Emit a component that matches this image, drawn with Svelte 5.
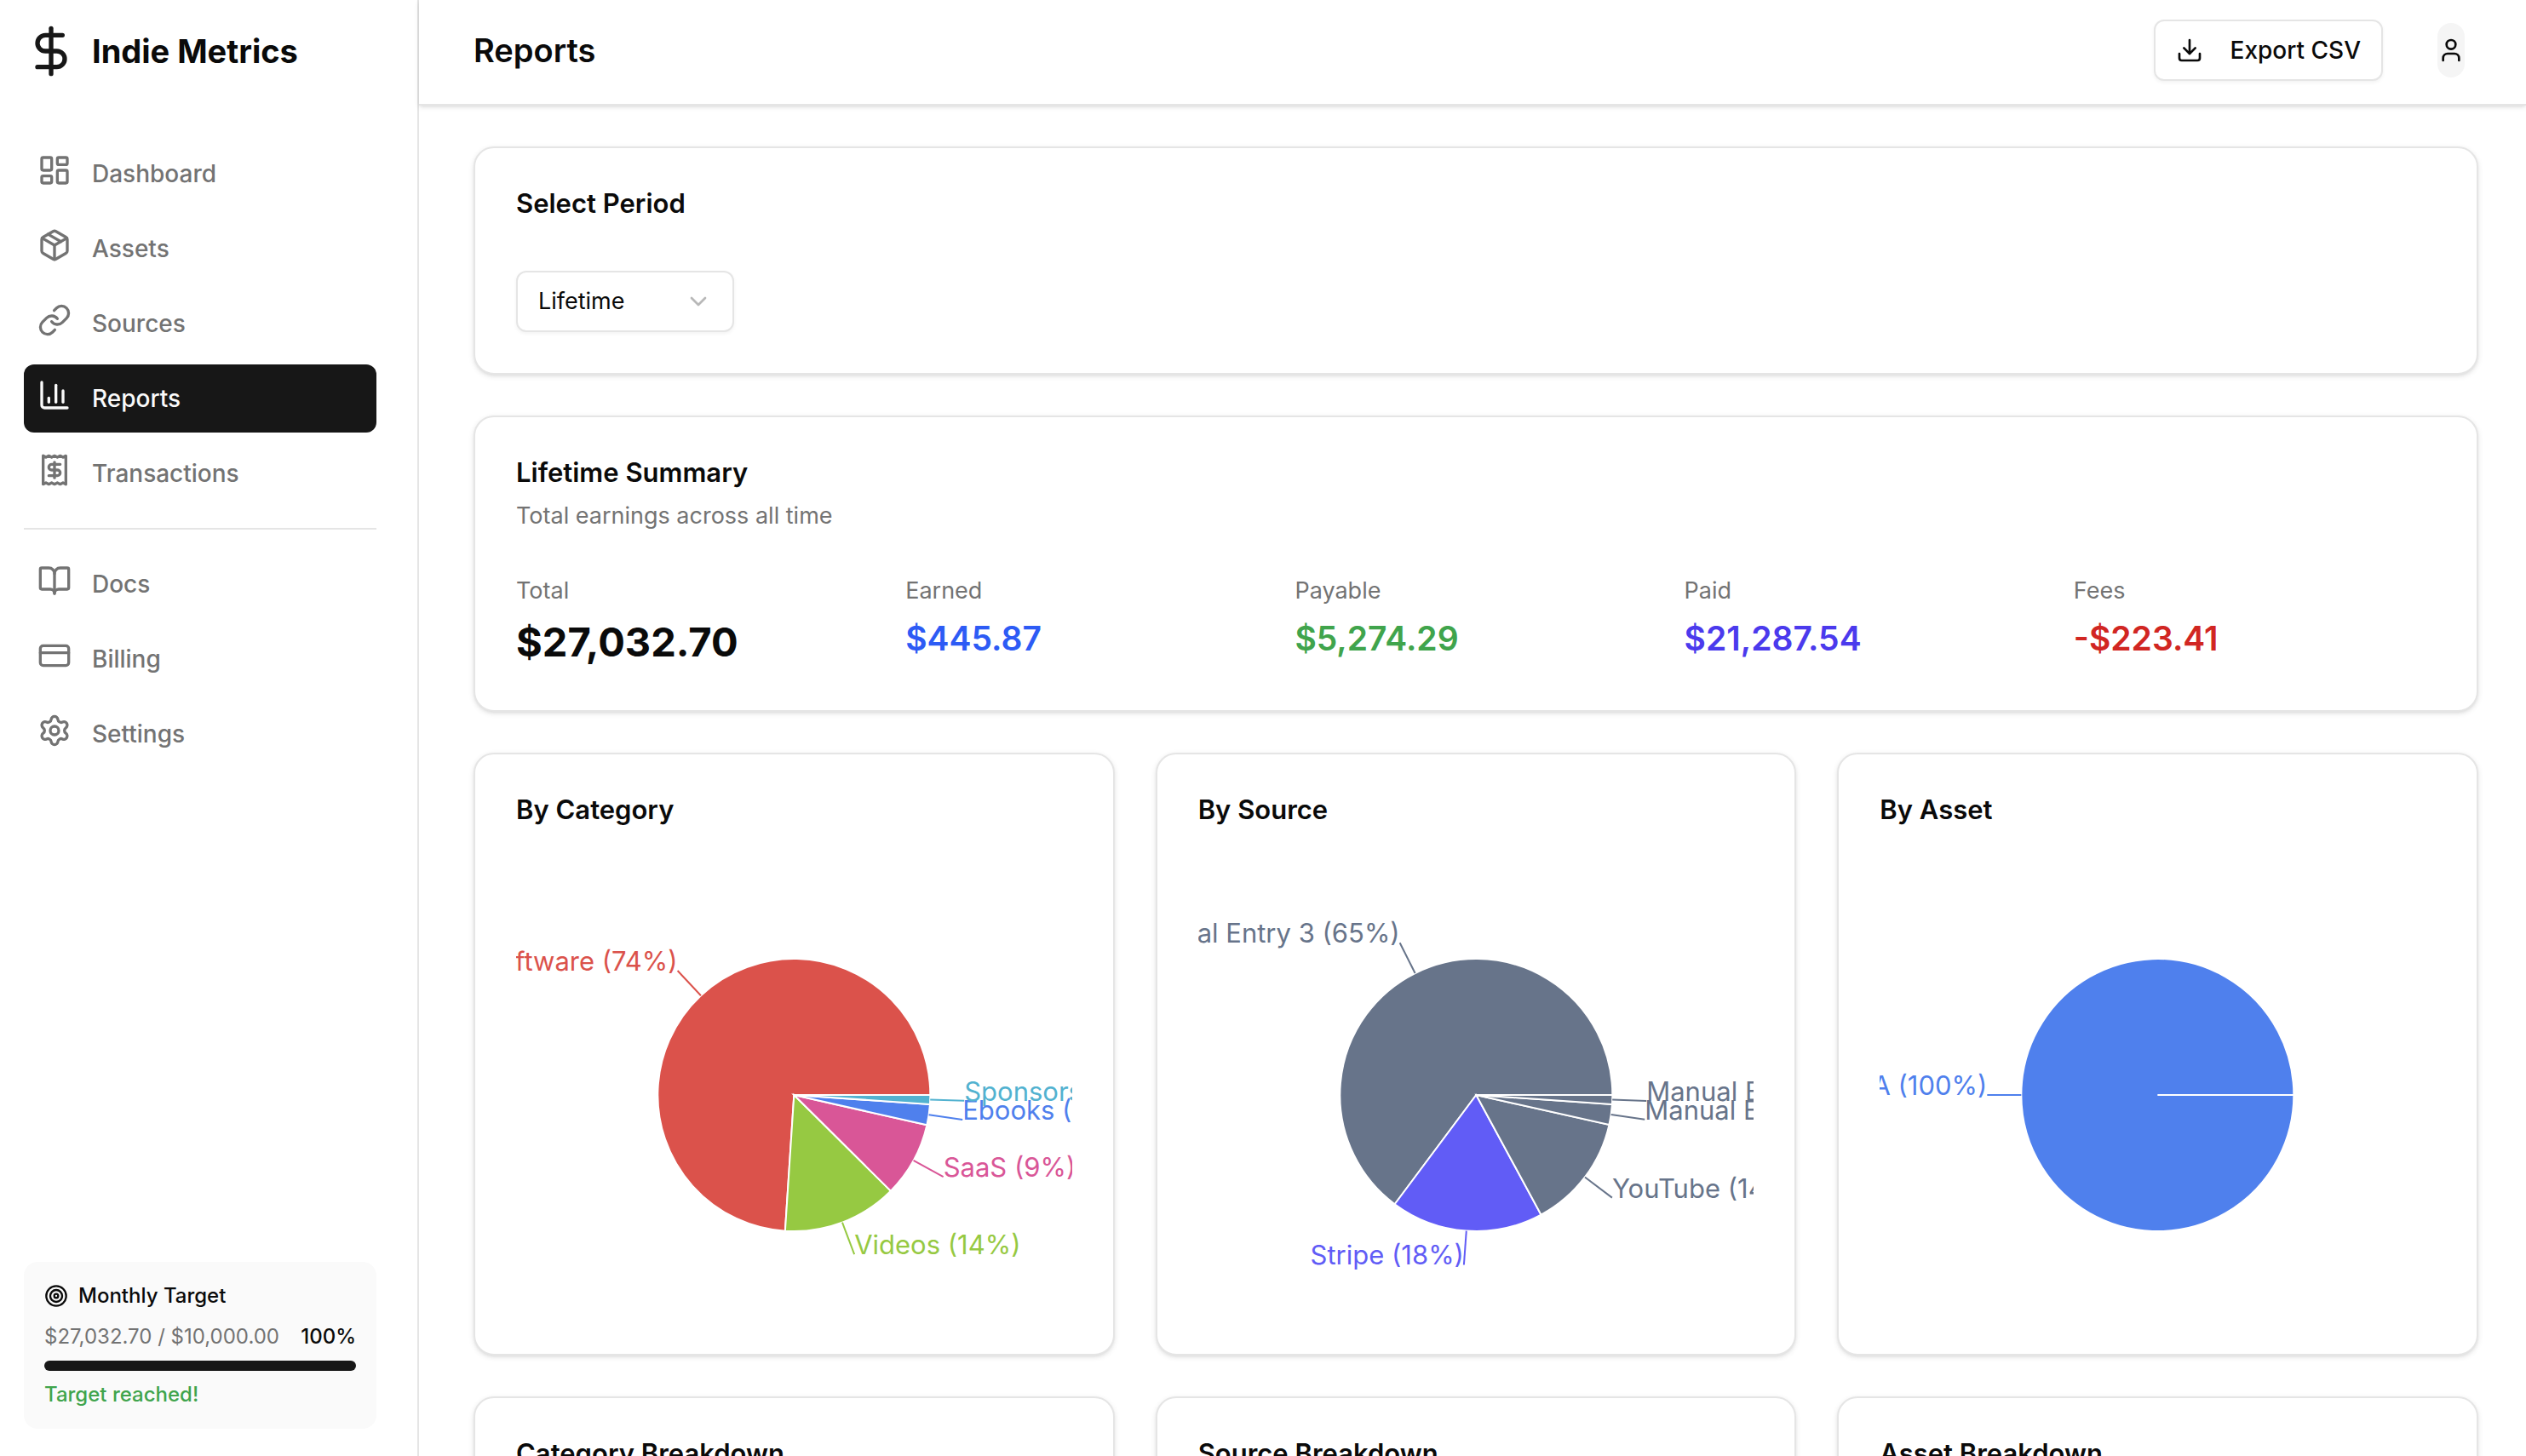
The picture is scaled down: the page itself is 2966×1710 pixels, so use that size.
<script>
  const mainLinks = [
    { label: 'Dashboard', icon: 'dashboard' },
    { label: 'Assets', icon: 'package' },
    { label: 'Sources', icon: 'link' },
    { label: 'Reports', icon: 'chart' },
    { label: 'Transactions', icon: 'receipt' }
  ];

  const secondaryLinks = [
    { label: 'Docs', icon: 'book' },
    { label: 'Billing', icon: 'card' },
    { label: 'Settings', icon: 'settings' }
  ];

  const icons = {
    dollar: ['M12 2v20', 'M17 5H9.5a3.5 3.5 0 0 0 0 7h5a3.5 3.5 0 0 1 0 7H6'],
    dashboard: [
      'M4 3h5a1 1 0 0 1 1 1v7a1 1 0 0 1-1 1H4a1 1 0 0 1-1-1V4a1 1 0 0 1 1-1z',
      'M15 3h5a1 1 0 0 1 1 1v3a1 1 0 0 1-1 1h-5a1 1 0 0 1-1-1V4a1 1 0 0 1 1-1z',
      'M15 12h5a1 1 0 0 1 1 1v7a1 1 0 0 1-1 1h-5a1 1 0 0 1-1-1v-7a1 1 0 0 1 1-1z',
      'M4 16h5a1 1 0 0 1 1 1v3a1 1 0 0 1-1 1H4a1 1 0 0 1-1-1v-3a1 1 0 0 1 1-1z'
    ],
    package: [
      'M11 21.73a2 2 0 0 0 2 0l7-4A2 2 0 0 0 21 16V8a2 2 0 0 0-1-1.73l-7-4a2 2 0 0 0-2 0l-7 4A2 2 0 0 0 3 8v8a2 2 0 0 0 1 1.73z',
      'M12 22V12',
      'M3.29 7 12 12l8.71-5',
      'm7.5 4.27 9 5.15'
    ],
    link: [
      'M10 13a5 5 0 0 0 7.54.54l3-3a5 5 0 0 0-7.07-7.07l-1.72 1.71',
      'M14 11a5 5 0 0 0-7.54-.54l-3 3a5 5 0 0 0 7.07 7.07l1.71-1.71'
    ],
    chart: ['M3 3v16a2 2 0 0 0 2 2h16', 'M18 17V9', 'M13 17V5', 'M8 17v-3'],
    receipt: [
      'M4 2v20l2-1 2 1 2-1 2 1 2-1 2 1 2-1 2 1V2l-2 1-2-1-2 1-2-1-2 1-2-1-2 1Z',
      'M16 8h-6a2 2 0 1 0 0 4h4a2 2 0 1 1 0 4H8',
      'M12 17.5v-11'
    ],
    book: [
      'M12 7v14',
      'M3 18a1 1 0 0 1-1-1V4a1 1 0 0 1 1-1h5a4 4 0 0 1 4 4 4 4 0 0 1 4-4h5a1 1 0 0 1 1 1v13a1 1 0 0 1-1 1h-6a3 3 0 0 0-3 3 3 3 0 0 0-3-3z'
    ],
    card: ['M4 5h16a2 2 0 0 1 2 2v10a2 2 0 0 1-2 2H4a2 2 0 0 1-2-2V7a2 2 0 0 1 2-2z', 'M2 10h20'],
    settings: [
      'M9.671 4.136a2.34 2.34 0 0 1 4.659 0 2.34 2.34 0 0 0 3.319 1.915 2.34 2.34 0 0 1 2.33 4.033 2.34 2.34 0 0 0 0 3.831 2.34 2.34 0 0 1-2.33 4.033 2.34 2.34 0 0 0-3.319 1.915 2.34 2.34 0 0 1-4.659 0 2.34 2.34 0 0 0-3.32-1.915 2.34 2.34 0 0 1-2.33-4.033 2.34 2.34 0 0 0 0-3.831A2.34 2.34 0 0 1 6.35 6.051a2.34 2.34 0 0 0 3.319-1.915',
      'M9 12a3 3 0 1 0 6 0a3 3 0 1 0-6 0'
    ],
    target: [
      'M2 12a10 10 0 1 0 20 0a10 10 0 1 0-20 0',
      'M6 12a6 6 0 1 0 12 0a6 6 0 1 0-12 0',
      'M10 12a2 2 0 1 0 4 0a2 2 0 1 0-4 0'
    ],
    download: ['M21 15v4a2 2 0 0 1-2 2H5a2 2 0 0 1-2-2v-4', 'm7 10 5 5 5-5', 'M12 15V3'],
    user: ['M19 21v-2a4 4 0 0 0-4-4H9a4 4 0 0 0-4 4v2', 'M8 7a4 4 0 1 0 8 0a4 4 0 1 0-8 0'],
    chevron: ['m6 9 6 6 6-6']
  };

  const stats = [
    { label: 'Total', value: '$27,032.70', tone: 'total' },
    { label: 'Earned', value: '$445.87', tone: 'earned' },
    { label: 'Payable', value: '$5,274.29', tone: 'payable' },
    { label: 'Paid', value: '$21,287.54', tone: 'paid' },
    { label: 'Fees', value: '-$223.41', tone: 'fees' }
  ];

  const charts = [
    {
      title: 'By Category',
      items: [
        { name: 'Software', share: 73.96, color: '#db524b' },
        { name: 'Videos', share: 13.6, color: '#96c942' },
        { name: 'SaaS', share: 8.9, color: '#d95697' },
        { name: 'Ebooks', share: 2.45, color: '#4f80ed' },
        { name: 'Sponsorships', share: 1.09, color: '#52b2d0' }
      ]
    },
    {
      title: 'By Source',
      items: [
        { name: 'Manual Entry 3', share: 64.8, color: '#67748a' },
        { name: 'Stripe', share: 18.1, color: '#615cf6' },
        { name: 'YouTube', share: 13.6, color: '#67748a' },
        { name: 'Manual Entry 2', share: 2.4, color: '#67748a' },
        { name: 'Manual Entry 1', share: 1.1, color: '#67748a' }
      ]
    },
    {
      title: 'By Asset',
      items: [{ name: 'N/A', share: 100, color: '#4f80ed' }]
    }
  ];

  const breakdowns = ['Category Breakdown', 'Source Breakdown', 'Asset Breakdown'];

  const RADIUS = 160;
  const LABEL_RADIUS = 200;

  let period = $state('lifetime');

  function point(radius, degrees) {
    const rad = (degrees * Math.PI) / 180;
    return { x: radius * Math.cos(rad), y: -radius * Math.sin(rad) };
  }

  // Slices run counter-clockwise from 3 o'clock
  function buildSlices(items) {
    let start = 0;
    return items.map((item) => {
      const sweep = Math.min(item.share * 3.6, 359.99);
      const end = start + sweep;
      const mid = start + sweep / 2;
      const a = point(RADIUS, start);
      const b = point(RADIUS, end);
      const large = sweep > 180 ? 1 : 0;
      const label = point(LABEL_RADIUS, mid);
      start = end;
      return {
        ...item,
        path: `M0 0L${a.x} ${a.y}A${RADIUS} ${RADIUS} 0 ${large} 0 ${b.x} ${b.y}Z`,
        from: point(RADIUS, mid),
        label,
        anchor: label.x < 0 ? 'end' : 'start',
        text: `${item.name} (${item.share.toFixed(0)}%)`
      };
    });
  }
</script>

{#snippet icon(name, cls)}
  <svg
    class={cls}
    viewBox="0 0 24 24"
    fill="none"
    stroke="currentColor"
    stroke-width="2"
    stroke-linecap="round"
    stroke-linejoin="round"
    aria-hidden="true"
  >
    {#each icons[name] as d}
      <path {d} />
    {/each}
  </svg>
{/snippet}

{#snippet navItem(item)}
  <a
    href="#{item.label.toLowerCase()}"
    class="nav-item"
    class:active={item.label === 'Reports'}
    aria-current={item.label === 'Reports' ? 'page' : undefined}
  >
    {@render icon(item.icon, 'nav-icon')}
    <span>{item.label}</span>
  </a>
{/snippet}

<div class="app">
  <aside class="sidebar">
    <div class="brand">
      {@render icon('dollar', 'brand-icon')}
      <span>Indie Metrics</span>
    </div>

    <nav class="nav">
      {#each mainLinks as item}
        {@render navItem(item)}
      {/each}
      <hr class="divider" />
      {#each secondaryLinks as item}
        {@render navItem(item)}
      {/each}
    </nav>

    <div class="target">
      <div class="target-title">
        {@render icon('target', 'target-icon')}
        <span>Monthly Target</span>
      </div>
      <div class="target-row">
        <span class="muted">$27,032.70 / $10,000.00</span>
        <span class="percent">100%</span>
      </div>
      <div class="progress">
        <div class="progress-fill" style="width: {100}%"></div>
      </div>
      <div class="target-done">Target reached!</div>
    </div>
  </aside>

  <div class="main">
    <header class="header">
      <h1>Reports</h1>
      <div class="actions">
        <button type="button" class="export-btn">
          {@render icon('download', 'small-icon')}
          <span>Export CSV</span>
        </button>
        <button type="button" class="user-btn" aria-label="Account">
          <span class="avatar">{@render icon('user', 'small-icon')}</span>
        </button>
      </div>
    </header>

    <main class="content">
      <section class="card period-card">
        <h2><label for="period">Select Period</label></h2>
        <div class="select-wrap">
          <select id="period" bind:value={period}>
            <option value="lifetime">Lifetime</option>
          </select>
          {@render icon('chevron', 'chevron')}
        </div>
      </section>

      <section class="card">
        <h2>Lifetime Summary</h2>
        <p class="subtitle">Total earnings across all time</p>
        <div class="stats">
          {#each stats as stat}
            <div class="stat">
              <div class="stat-label">{stat.label}</div>
              <div class="stat-value {stat.tone}">{stat.value}</div>
            </div>
          {/each}
        </div>
      </section>

      <div class="grid">
        {#each charts as chart}
          <section class="card chart-card">
            <h2>{chart.title}</h2>
            <svg class="pie" viewBox="-256 -256 512 512" role="img" aria-label={chart.title}>
              {#each buildSlices(chart.items) as slice}
                <path d={slice.path} fill={slice.color} stroke="#fff" stroke-width="2" />
              {/each}
              {#each buildSlices(chart.items) as slice}
                <line
                  x1={slice.from.x}
                  y1={slice.from.y}
                  x2={slice.label.x}
                  y2={slice.label.y}
                  stroke={slice.color}
                  stroke-width="2"
                />
                <text x={slice.label.x} y={slice.label.y} text-anchor={slice.anchor} fill={slice.color}>
                  {slice.text}
                </text>
              {/each}
            </svg>
          </section>
        {/each}
      </div>

      <div class="grid">
        {#each breakdowns as title}
          <section class="card breakdown-card">
            <h2>{title}</h2>
          </section>
        {/each}
      </div>
    </main>
  </div>
</div>

<style>
  :global(body) {
    margin: 0;
    background: #fff;
  }

  .app {
    display: flex;
    height: 100vh;
    overflow: hidden;
    background: #fff;
    color: #0a0a0a;
    font-family: Inter, 'Liberation Sans', sans-serif;
    font-size: 28px;
    line-height: 40px;
  }

  .app *,
  .app {
    box-sizing: border-box;
  }

  h1,
  h2,
  p {
    margin: 0;
  }

  button,
  select {
    font: inherit;
    color: inherit;
    cursor: pointer;
  }

  /* Sidebar */
  .sidebar {
    display: flex;
    flex-direction: column;
    flex: 0 0 492px;
    padding: 0 48px 32px 28px;
    border-right: 2px solid #e5e5e5;
  }

  .brand {
    display: flex;
    align-items: center;
    gap: 16px;
    height: 120px;
    font-size: 38px;
    font-weight: 700;
  }

  .brand :global(.brand-icon) {
    width: 64px;
    height: 64px;
    color: #171717;
  }

  .nav {
    display: flex;
    flex-direction: column;
    gap: 8px;
    padding-top: 44px;
  }

  .nav-item {
    display: flex;
    align-items: flex-start;
    gap: 24px;
    padding: 16px;
    border-radius: 12px;
    color: #737373;
    font-weight: 500;
    line-height: 48px;
    text-decoration: none;
  }

  .nav-item.active {
    background: #171717;
    color: #fafafa;
  }

  .nav-item :global(.nav-icon) {
    width: 40px;
    height: 40px;
  }

  .divider {
    width: 100%;
    height: 2px;
    margin: 16px 0;
    border: 0;
    background: #e5e5e5;
  }

  .target {
    margin-top: auto;
    padding: 24px;
    border-radius: 16px;
    background: #fafafa;
    font-size: 24px;
    line-height: 32px;
  }

  .target-title {
    display: flex;
    align-items: center;
    gap: 12px;
    font-weight: 500;
  }

  .target-title :global(.target-icon) {
    width: 28px;
    height: 28px;
  }

  .target-row {
    display: flex;
    justify-content: space-between;
    margin: 16px 0 12px;
    white-space: nowrap;
  }

  .muted {
    color: #737373;
  }

  .percent {
    font-weight: 500;
  }

  .progress {
    height: 12px;
    border-radius: 6px;
    overflow: hidden;
    background: #e5e5e5;
  }

  .progress-fill {
    height: 100%;
    background: #171717;
  }

  .target-done {
    margin-top: 12px;
    color: #40a44c;
    font-weight: 500;
  }

  /* Main column */
  .main {
    display: flex;
    flex-direction: column;
    flex: 1;
    min-width: 0;
  }

  .header {
    display: flex;
    align-items: center;
    justify-content: space-between;
    flex: 0 0 124px;
    padding: 0 56px 4px 64px;
    border-bottom: 2px solid #e5e5e5;
    box-shadow: 0 2px 6px rgba(0, 0, 0, 0.1), 0 2px 4px -2px rgba(0, 0, 0, 0.1);
  }

  h1 {
    font-size: 38px;
    font-weight: 600;
  }

  .actions {
    display: flex;
    align-items: center;
    gap: 48px;
  }

  .actions :global(.small-icon) {
    width: 32px;
    height: 32px;
  }

  .export-btn {
    display: flex;
    align-items: center;
    gap: 32px;
    height: 72px;
    padding: 0 24px;
    border: 2px solid #e5e5e5;
    border-radius: 12px;
    background: #fff;
    font-weight: 500;
    box-shadow: 0 2px 4px rgba(0, 0, 0, 0.05);
  }

  .user-btn {
    padding: 0 16px;
    border: 0;
    background: none;
  }

  .avatar {
    display: flex;
    align-items: center;
    height: 64px;
    border-radius: 16px;
    background: #f5f5f5;
  }

  .content {
    display: flex;
    flex-direction: column;
    flex: 1;
    gap: 48px;
    min-height: 0;
    padding: 48px 56px 48px 64px;
    overflow-y: auto;
    scrollbar-width: none;
  }

  .card {
    flex-shrink: 0;
    padding: 48px;
    border: 2px solid #e5e5e5;
    border-radius: 24px;
    background: #fff;
    box-shadow: 0 2px 6px rgba(0, 0, 0, 0.1), 0 2px 4px -2px rgba(0, 0, 0, 0.1);
  }

  h2 {
    font-size: 31px;
    font-weight: 600;
    line-height: 34px;
  }

  .select-wrap {
    display: grid;
    align-items: center;
    width: 256px;
    margin-top: 62px;
  }

  .select-wrap select {
    grid-area: 1 / 1;
    height: 72px;
    padding: 0 72px 0 24px;
    border: 2px solid #e5e5e5;
    border-radius: 12px;
    background: #fff;
    font-size: 27px;
    box-shadow: 0 2px 4px rgba(0, 0, 0, 0.05);
    appearance: none;
  }

  .select-wrap :global(.chevron) {
    grid-area: 1 / 1;
    justify-self: end;
    width: 32px;
    height: 32px;
    margin-right: 26px;
    color: #737373;
    opacity: 0.5;
    pointer-events: none;
  }

  .subtitle {
    margin-top: 14px;
    color: #737373;
    font-size: 27px;
  }

  .stats {
    display: grid;
    grid-template-columns: repeat(5, 1fr);
    gap: 32px;
    margin-top: 48px;
  }

  .stat-label {
    color: #737373;
    font-size: 27px;
  }

  .stat-value {
    margin-top: 8px;
    font-size: 39px;
    font-weight: 600;
    line-height: 56px;
  }

  .stat-value.total {
    font-size: 47px;
    font-weight: 700;
    line-height: 64px;
  }

  .earned {
    color: #2d5bf5;
  }

  .payable {
    color: #40a44c;
  }

  .paid {
    color: #4b3aed;
  }

  .fees {
    color: #d12622;
  }

  .grid {
    display: grid;
    grid-template-columns: repeat(3, 1fr);
    flex-shrink: 0;
    gap: 48px;
  }

  .pie {
    display: block;
    width: 100%;
    height: 512px;
    margin-top: 62px;
    overflow: hidden;
    font-size: 31px;
  }

  .breakdown-card {
    min-height: 320px;
  }
</style>
